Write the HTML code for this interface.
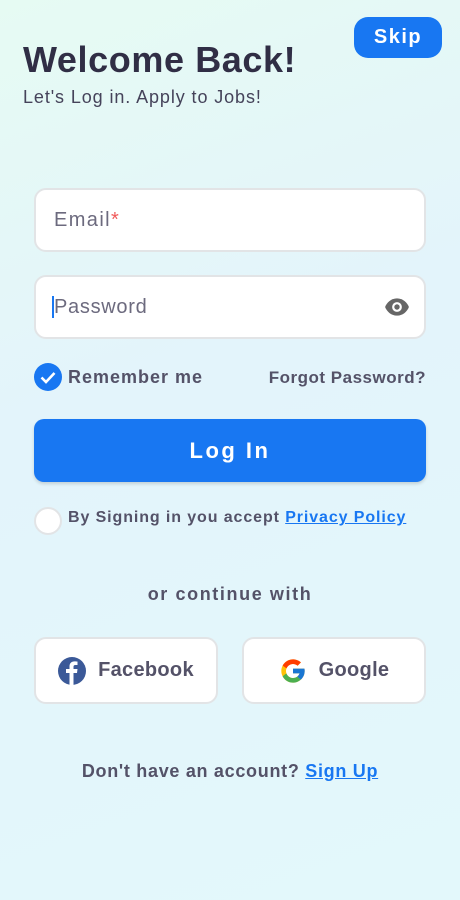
<!DOCTYPE html>
<html><head><style>
*{margin:0;padding:0;box-sizing:border-box}
body{width:460px;height:900px;overflow:hidden;font-family:"Liberation Sans",sans-serif;background:linear-gradient(160deg,#e6fbf3 0%,#e3f4fb 40%,#e3f8fb 100%);position:relative;color:#545268}
.a{position:absolute}
.skip{left:354px;top:17px;width:88px;height:41px;background:#1877f2;border-radius:14px;color:#fff;font-weight:bold;font-size:20px;text-align:center;line-height:41px;letter-spacing:1.5px}
h1{position:absolute;left:23px;top:39px;font-size:36px;color:#302e45;font-weight:900;letter-spacing:0.6px}
.sub{left:23px;top:87px;font-size:18px;color:#45435a;letter-spacing:0.9px}
.inp{left:34px;width:392px;height:64px;background:#fff;border:2px solid #e2e4e6;border-radius:12px;font-size:20px;color:#6c6a7e;padding-left:18px;line-height:60px}
.btn{left:34px;top:419px;width:392px;height:63px;background:#1877f2;border-radius:10px;color:#fff;font-weight:bold;font-size:22px;text-align:center;line-height:63px;letter-spacing:2.5px;box-shadow:0 2px 3px rgba(0,0,0,.15)}
.soc{top:637px;width:184px;height:67px;background:#fff;border:2px solid #e2e4e6;border-radius:12px;font-weight:bold;font-size:20px;color:#545268;display:flex;align-items:center;justify-content:center;gap:12px;letter-spacing:0.3px}
a{color:#1877f2;font-weight:bold;text-decoration:underline}
</style></head><body>
<div class="a skip">Skip</div>
<h1>Welcome Back!</h1>
<div class="a sub">Let's Log in. Apply to Jobs!</div>
<div class="a inp" style="top:188px;letter-spacing:1.4px">Email<span style="color:#f05a5a">*</span></div>
<div class="a inp" style="top:275px;padding-left:16px;letter-spacing:0.7px"><span style="border-left:2px solid #1877f2">Password</span>
<svg class="a" style="right:14px;top:20px" width="26" height="20" viewBox="0 0 24 18"><path d="M12 1C6.5 1 2.5 5 1 9c1.5 4 5.5 8 11 8s9.5-4 11-8C21.5 5 17.5 1 12 1z" fill="#666"/><circle cx="12" cy="9" r="4.5" fill="#fff"/><circle cx="12" cy="9" r="2.5" fill="#666"/></svg></div>
<svg class="a" style="left:34px;top:363px" width="28" height="28"><circle cx="14" cy="14" r="14" fill="#1877f2"/><path d="M7.5 14.5l4.5 4.5 8.5-9" stroke="#fff" stroke-width="2.6" fill="none"/></svg>
<div class="a" style="left:68px;top:367px;font-size:18px;font-weight:bold;color:#545268;letter-spacing:1px">Remember me</div>
<div class="a" style="right:34px;top:368px;font-size:17px;color:#545268;font-weight:bold;letter-spacing:0.5px">Forgot Password?</div>
<div class="a btn">Log In</div>
<div class="a" style="left:34px;top:507px;width:28px;height:28px;border-radius:50%;background:#fff;border:2px solid #e2e4e6"></div>
<div class="a" style="left:68px;top:509px;font-size:16px;font-weight:bold;letter-spacing:0.9px">By Signing in you accept <a>Privacy Policy</a></div>
<div class="a" style="left:0;width:460px;top:584px;text-align:center;font-size:18px;font-weight:bold;color:#545268;letter-spacing:1.6px">or continue with</div>
<div class="a soc" style="left:34px"><svg width="28" height="28" viewBox="0 0 28 28"><circle cx="14" cy="14" r="14" fill="#3b5998"/><path d="M15.5 28V16h3.5l.5-4h-4V10c0-1.2.4-2 2-2h2V4.6c-.4 0-1.6-.2-3-.2-3 0-5 1.8-5 5.1V12H8v4h3.5v12z" fill="#fff"/></svg>Facebook</div>
<div class="a soc" style="left:242px"><svg width="28" height="28" viewBox="0 0 48 48"><path fill="#FFC107" d="M43.6 20H24v8h11.3C33.7 33 29.3 36 24 36c-6.6 0-12-5.4-12-12s5.4-12 12-12c3 0 5.8 1.1 7.9 3l5.7-5.7C34 6 29.3 4 24 4 13 4 4 13 4 24s9 20 20 20 20-9 20-20c0-1.3-.1-2.7-.4-4z"/><path fill="#FF3D00" d="M6.3 14.7l6.6 4.8C14.7 15.1 19 12 24 12c3 0 5.8 1.1 7.9 3l5.7-5.7C34 6 29.3 4 24 4 16.3 4 9.7 8.3 6.3 14.7z"/><path fill="#4CAF50" d="M24 44c5.200 0 9.9-2 13.4-5.2l-6.2-5.2C29.2 35.1 26.7 36 24 36c-5.2 0-9.6-3.3-11.3-8l-6.5 5C9.5 39.6 16.2 44 24 44z"/><path fill="#1976D2" d="M43.6 20H24v8h11.3c-.8 2.2-2.2 4.2-4.1 5.6l6.2 5.2C37 39.2 44 34 44 24c0-1.3-.1-2.7-.4-4z"/></svg>Google</div>
<div class="a" style="left:0;width:460px;top:761px;text-align:center;font-size:18px;font-weight:bold;letter-spacing:0.7px">Don't have an account? <a>Sign Up</a></div>
</body></html>
